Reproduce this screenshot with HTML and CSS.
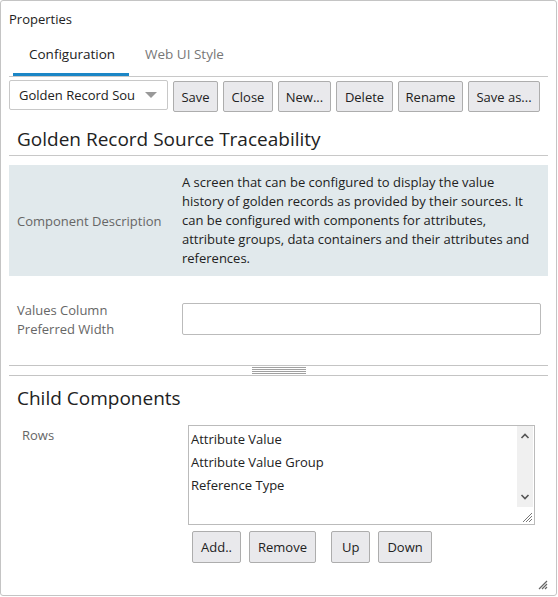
FILE: index.html
```html
<!DOCTYPE html>
<html>
<head>
<meta charset="utf-8">
<link rel="stylesheet" href="styles.css">
</head>
<body>
<div class="panel">
  <div class="title">Properties</div>
  <div class="tabs">
    <div class="tab active">Configuration</div>
    <div class="tab">Web UI Style</div>
  </div>
  <div class="toolbar">
    <div class="select"><span>Golden Record Sou</span><span class="caret"></span></div>
    <button class="btn w-save">Save</button>
    <button class="btn w-close">Close</button>
    <button class="btn w-new">New...</button>
    <button class="btn w-delete">Delete</button>
    <button class="btn w-rename">Rename</button>
    <button class="btn w-saveas">Save as...</button>
  </div>
  <h2 class="heading">Golden Record Source Traceability</h2>
  <div class="desc">
    <div class="desc-label">Component Description</div>
    <div class="desc-text">A screen that can be configured to display the value history of golden records as provided by their sources. It can be configured with components for attributes, attribute groups, data containers and their attributes and references.</div>
  </div>
  <div class="field">
    <div class="field-label">Values Column Preferred Width</div>
    <div class="input"></div>
  </div>
  <div class="splitter"><div class="grip"></div></div>
  <h2 class="heading2">Child Components</h2>
  <div class="rows">
    <div class="rows-label">Rows</div>
    <div class="rows-main">
      <div class="list">
        <div class="items">
          <div class="item">Attribute Value</div>
          <div class="item">Attribute Value Group</div>
          <div class="item">Reference Type</div>
        </div>
        <div class="scroll">
          <svg width="16" height="81" viewBox="0 0 16 81"><path d="M4.5 12 L8 8.5 L11.5 12" fill="none" stroke="#555" stroke-width="1.6"/><path d="M4.5 69 L8 72.5 L11.5 69" fill="none" stroke="#555" stroke-width="1.6"/></svg>
        </div>
        <svg class="resize" width="12" height="12" viewBox="0 0 12 12"><path d="M11 2 L2 11 M11 5 L5 11 M11 8 L8 11" stroke="#777" stroke-width="1"/></svg>
      </div>
      <div class="list-buttons">
        <button class="btn b2">Add..</button>
        <button class="btn b2">Remove</button>
        <button class="btn b2 gap">Up</button>
        <button class="btn b2">Down</button>
      </div>
    </div>
  </div>
  <svg class="panel-resize" width="12" height="12" viewBox="0 0 12 12"><path d="M11 3 L3 11 M11 6 L6 11 M11 9 L9 11" stroke="#666" stroke-width="1.2"/></svg>
</div>
</body>
</html>
```
FILE: styles.css
```css
* { box-sizing: border-box; }
body {
  margin: 0;
  font-family: "Open Sans", "Noto Sans", sans-serif;
  font-size: 13px;
  color: #222;
  background: #fff;
}
.panel {
  position: relative;
  width: 557px;
  height: 596px;
  border: 1px solid #c4c4c4;
  border-radius: 3px;
  padding: 0 8px;
}
.title {
  padding-top: 9px;
  height: 34px;
  line-height: 18px;
  color: #222;
}
.tabs {
  display: flex;
  border-bottom: 1px solid #c8c8c8;
  height: 42px;
  padding-left: 4px;
}
.tab {
  padding: 0 16px;
  line-height: 38px;
  color: #777;
  font-size: 13.5px;
}
.tab.active {
  color: #222;
  border-bottom: 3px solid #1b86c6;
  width: 116px;
}
.toolbar {
  display: flex;
  gap: 5px;
  margin-top: 3px;
  align-items: flex-start;
}
.select {
  width: 159px;
  height: 30px;
  flex: none;
  border: 1px solid #c8c8c8;
  border-radius: 2px;
  display: flex;
  align-items: center;
  justify-content: space-between;
  padding: 0 10px 0 9px;
  color: #222;
}
.caret {
  width: 0; height: 0;
  border-left: 6px solid transparent;
  border-right: 6px solid transparent;
  border-top: 6px solid #999;
}
.btn {
  font-family: inherit;
  font-size: 13px;
  color: #222;
  background: #e9e9ec;
  border: 1px solid #adadad;
  border-radius: 2px;
  height: 31px;
  padding: 0 6px;
  margin: 1px 0 0 0;
  white-space: nowrap;
  flex: none;
}
.w-save { width: 45px; }
.w-close { width: 50px; }
.w-new { width: 53px; }
.w-delete { width: 57px; }
.w-rename { width: 65px; }
.w-saveas { width: 72px; }
.heading {
  margin: 13px 0 0 0;
  padding: 0 0 0 8px;
  font-weight: normal;
  font-size: 19px;
  line-height: 28px;
  height: 31px;
  border-bottom: 1px solid #c8c8c8;
}
.desc {
  margin-top: 9px;
  background: #e1e9ec;
  display: flex;
  align-items: center;
  padding: 8px 0 8px 8px;
}
.desc-label {
  width: 165px;
  color: #666;
  flex: none;
}
.desc-text {
  width: 354px;
  line-height: 19px;
  color: #222;
}
.field {
  display: flex;
  margin-top: 27px;
  padding-left: 8px;
  height: 62px;
}
.field-label {
  width: 165px;
  line-height: 19px;
  color: #666;
  padding-right: 60px;
  flex: none;
  margin-top: -2px;
}
.input {
  width: 359px;
  height: 32px;
  border: 1px solid #bbb;
  border-radius: 2px;
}
.splitter {
  border-top: 1px solid #c4c4c4;
  border-bottom: 1px solid #c4c4c4;
  height: 11px;
  display: flex;
  justify-content: center;
  padding-top: 1px;
}
.grip {
  width: 54px;
  height: 7px;
  background: repeating-linear-gradient(to bottom, #a0a0a0 0, #a0a0a0 1px, transparent 1px, transparent 2px);
}
.heading2 {
  margin: 0;
  padding: 10px 0 0 8px;
  font-weight: normal;
  font-size: 19px;
  line-height: 24px;
  height: 49px;
}
.rows {
  display: flex;
}
.rows-label {
  width: 179px;
  padding-left: 13px;
  color: #666;
  flex: none;
  line-height: 18px;
  margin-top: 1px;
}
.rows-main {
  display: flex;
  flex-direction: column;
}
.list {
  position: relative;
  width: 347px;
  height: 100px;
  border: 1px solid #bbb;
  display: flex;
}
.items {
  flex: 1;
  padding: 2px 0 0 2px;
}
.item {
  line-height: 23px;
  color: #222;
}
.scroll {
  width: 16px;
  height: 81px;
  background: #f0f0f0;
  margin-right: 1px;
}
.scroll svg { display: block; }
.resize {
  position: absolute;
  right: 1px;
  bottom: 1px;
}
.list-buttons {
  display: flex;
  gap: 8px;
  margin-top: 5px;
  padding-left: 4px;
}
.b2 { height: 32px; padding: 0 8px; }
.b2.gap { margin-left: 7px; padding: 0 10px; }
.panel-resize {
  position: absolute;
  right: 8px;
  bottom: 5px;
}
```
